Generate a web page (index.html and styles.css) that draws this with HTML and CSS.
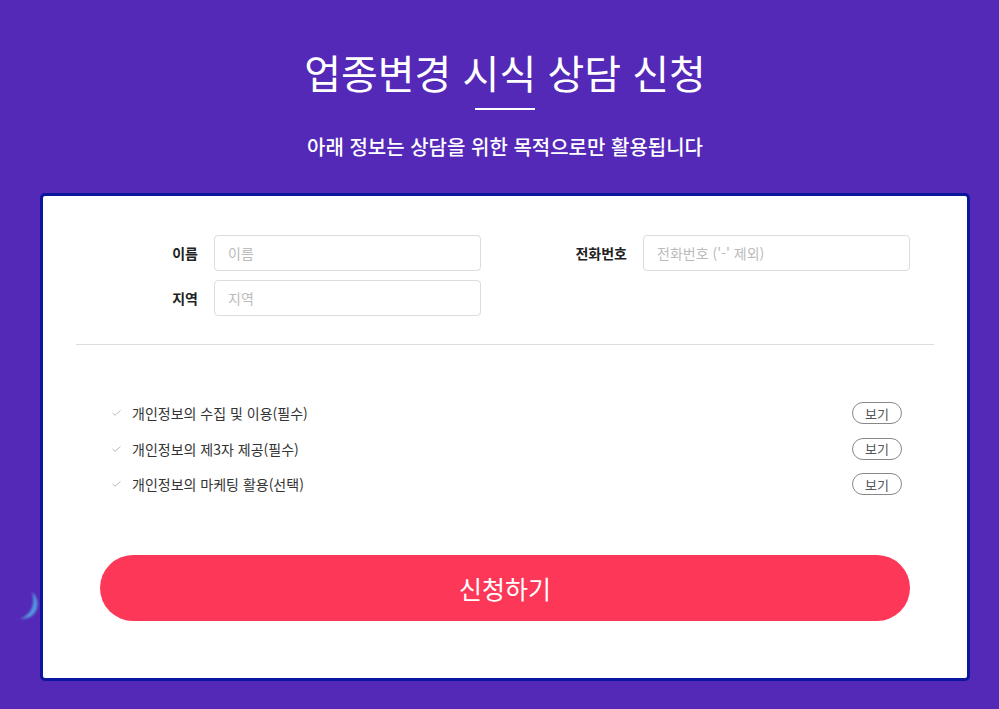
FILE: index.html
```html
<!DOCTYPE html>
<html lang="ko">
<head>
  <meta charset="UTF-8">
  <meta name="viewport" content="width=device-width, initial-scale=1.0">
  <title>업종변경 시식 상담 신청</title>
  <link rel="stylesheet" href="styles.css">
</head>
<body>
  <div class="wrap">
    <h1>업종변경 시식 상담 신청</h1>
    <div class="bar"></div>
    <p class="sub">아래 정보는 상담을 위한 목적으로만 활용됩니다</p>

    <div class="card">
      <!-- 장식 -->
      <svg class="deco" width="30" height="36" viewBox="0 0 30 36">
        <path d="M19 3 C29 11 26 31 7 30 C17 26 23 17 19 3 Z" fill="#55a9e2" opacity="0.85"/>
      </svg>

      <div class="form">
        <div class="field">
          <label>이름</label>
          <input type="text" placeholder="이름">
        </div>
        <div class="field">
          <label>전화번호</label>
          <input type="text" placeholder="전화번호 ('-' 제외)">
        </div>
        <div class="field">
          <label>지역</label>
          <input type="text" placeholder="지역">
        </div>
      </div>

      <hr class="line">

      <ul class="agree">
        <li>
          <svg class="check" width="9" height="6" viewBox="0 0 9 6"><polyline points="0.5,3 3,5.3 8.5,0.5" fill="none" stroke="#bbb" stroke-width="1"/></svg>
          <span>개인정보의 수집 및 이용(필수)</span>
          <button class="view">보기</button>
        </li>
        <li>
          <svg class="check" width="9" height="6" viewBox="0 0 9 6"><polyline points="0.5,3 3,5.3 8.5,0.5" fill="none" stroke="#bbb" stroke-width="1"/></svg>
          <span>개인정보의 제3자 제공(필수)</span>
          <button class="view">보기</button>
        </li>
        <li>
          <svg class="check" width="9" height="6" viewBox="0 0 9 6"><polyline points="0.5,3 3,5.3 8.5,0.5" fill="none" stroke="#bbb" stroke-width="1"/></svg>
          <span>개인정보의 마케팅 활용(선택)</span>
          <button class="view">보기</button>
        </li>
      </ul>

      <button class="submit">신청하기</button>
    </div>
  </div>
</body>
</html>
```

FILE: styles.css
```css
body {
  margin: 0;
  background-color: #5429b8;
  font-family: "Noto Sans CJK KR", "Noto Sans", sans-serif;
  color: #222;
}
.wrap {
  width: 930px;
  margin-left: 40px;
  padding-top: 47px;
  padding-bottom: 28px;
  text-align: center;
}
h1 {
  margin: 0;
  font-size: 40px;
  line-height: 50px;
  font-weight: 400;
  color: #fff;
}
.bar {
  width: 60px;
  height: 2px;
  margin: 11px auto 0;
  background: #fff;
}
.sub {
  margin: 23px 0 0;
  font-size: 20px;
  line-height: 28px;
  font-weight: 500;
  color: #fff;
}
.card {
  position: relative;
  margin-top: 32px;
  border: 3px solid #0b169e;
  border-radius: 5px;
  background: #fff;
  padding: 39px 33px 57px;
  text-align: left;
}
.deco {
  position: absolute;
  left: -30px;
  top: 393px;
  filter: blur(1px);
}
.form {
  display: grid;
  grid-template-columns: 347px 347px;
  column-gap: 82px;
  row-gap: 9px;
  padding-left: 58px;
}
.field {
  display: flex;
  align-items: center;
  gap: 16px;
}
.field label {
  width: 64px;
  text-align: right;
  font-size: 14px;
  font-weight: 700;
  color: #222;
}
.field input {
  width: 267px;
  height: 36px;
  box-sizing: border-box;
  border: 1px solid #dcdcdc;
  border-radius: 4px;
  padding: 0 13px;
  font-family: inherit;
  font-size: 14px;
  color: #333;
  outline: none;
}
.field input::placeholder {
  color: #bbb;
}
.line {
  margin: 28px 0 0;
  border: none;
  border-top: 1px solid #ddd;
}
.agree {
  list-style: none;
  margin: 57px 0 0;
  padding: 0 32px 0 36px;
  display: flex;
  flex-direction: column;
  gap: 13.5px;
}
.agree li {
  display: flex;
  align-items: center;
  height: 22px;
  font-size: 14px;
  color: #333;
}
.check {
  margin-right: 11px;
}
.agree span {
  flex: 1;
}
.view {
  width: 50px;
  height: 22px;
  border: 1px solid #888;
  border-radius: 11px;
  background: #fff;
  font-family: inherit;
  font-size: 13px;
  color: #555;
  padding: 0;
  cursor: pointer;
}
.submit {
  display: block;
  width: 810px;
  height: 66px;
  margin: 60px 0 0 24px;
  border: none;
  border-radius: 33px;
  background: #fc3757;
  color: #fff;
  font-family: inherit;
  font-size: 25px;
  cursor: pointer;
}
```
